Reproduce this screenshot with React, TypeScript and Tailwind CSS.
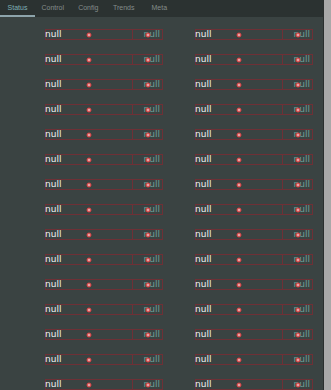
import React from "react";

const tabs = ["Status", "Control", "Config", "Trends", "Meta"];

function Dot() {
  return (
    <span className="absolute left-1/2 top-1/2 -translate-x-1/2 -translate-y-1/2 w-[5px] h-[5px] rounded-full border border-[#d8383a] bg-[#e9a4a4]" />
  );
}

function Item() {
  return (
    <div className="flex h-[11px] w-[118px] border border-[#6e3036]">
      <div className="relative flex-1 flex items-center">
        <span className="text-[9px] leading-none text-[#f2f2f2] -ml-px">null</span>
        <Dot />
      </div>
      <div className="relative w-[30px] border-l border-[#6e3036] flex items-center justify-end pr-[2px]">
        <span className="text-[9px] leading-none text-[#6f9d97]">null</span>
        <Dot />
      </div>
    </div>
  );
}

export default function App() {
  const rows = Array.from({ length: 15 });
  return (
    <div className="flex w-[331px] h-[390px] overflow-hidden bg-[#3a4342]" style={{ fontFamily: '"DejaVu Sans", sans-serif' }}>
      <div className="flex flex-col w-[323px]">
        <div className="flex h-[17px] bg-[#2b3231] shrink-0 text-[7px]" style={{ fontFamily: '"Liberation Sans", sans-serif' }}>
          {tabs.map((t, i) => (
            <div
              key={t}
              className={
                i === 0
                  ? "w-[35px] h-[17px] flex items-center justify-center text-[#7fb0b6] border-b-2 border-[#8da4ab] pt-[1px]"
                  : "w-[35.5px] h-[17px] flex items-center justify-center text-[#838c8a] pb-[1px]"
              }
            >
              {t}
            </div>
          ))}
        </div>
        <div className="h-px bg-[#4a5453]" />
        <div className="grid grid-cols-[118px_118px] gap-x-[32px] gap-y-[14px] pl-[45px] pt-[12px]">
          {rows.map((_, i) => (
            <React.Fragment key={i}>
              <Item />
              <Item />
            </React.Fragment>
          ))}
        </div>
      </div>
      <div className="w-px bg-[#2a2f2e]" />
      <div className="flex-1 bg-[#a9a9a9]" />
    </div>
  );
}
